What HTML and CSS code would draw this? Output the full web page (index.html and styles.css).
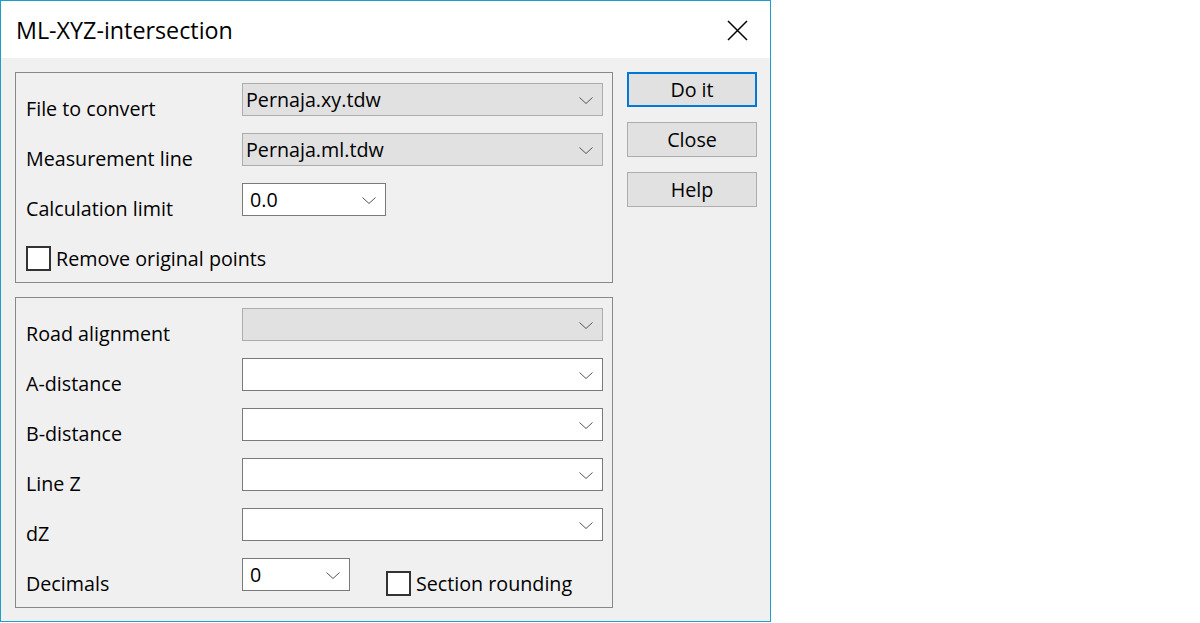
FILE: index.html
```html
<!DOCTYPE html>
<html>
<head>
<meta charset="utf-8">
<title>ML-XYZ-intersection</title>
<link rel="stylesheet" href="styles.css">
</head>
<body>
<div class="window">
  <div class="titlebar">
    <span class="title">ML-XYZ-intersection</span>
    <svg class="close" width="21" height="21" viewBox="0 0 21 21"><path d="M1 1L20 20M20 1L1 20" stroke="#000" stroke-width="1.5" fill="none"/></svg>
  </div>
  <div class="client">
    <div class="groups">
      <div class="group g1">
        <div class="row">
          <span class="label">File to convert</span>
          <div class="combo ro wide"><span class="val">Pernaja.xy.tdw</span><svg class="chev" width="14" height="7" viewBox="0 0 14 7"><polyline points="0.5,0.5 7,6.5 13.5,0.5" fill="none" stroke="#555" stroke-width="1"/></svg></div>
        </div>
        <div class="row">
          <span class="label">Measurement line</span>
          <div class="combo ro wide"><span class="val">Pernaja.ml.tdw</span><svg class="chev" width="14" height="7" viewBox="0 0 14 7"><polyline points="0.5,0.5 7,6.5 13.5,0.5" fill="none" stroke="#555" stroke-width="1"/></svg></div>
        </div>
        <div class="row">
          <span class="label">Calculation limit</span>
          <div class="combo ed limit"><span class="val">0.0</span><svg class="chev" width="14" height="7" viewBox="0 0 14 7"><polyline points="0.5,0.5 7,6.5 13.5,0.5" fill="none" stroke="#555" stroke-width="1"/></svg></div>
        </div>
        <div class="check first">
          <span class="box"></span><span class="ctext">Remove original points</span>
        </div>
      </div>
      <div class="group g2">
        <div class="row">
          <span class="label">Road alignment</span>
          <div class="combo ro wide"><span class="val"></span><svg class="chev" width="14" height="7" viewBox="0 0 14 7"><polyline points="0.5,0.5 7,6.5 13.5,0.5" fill="none" stroke="#555" stroke-width="1"/></svg></div>
        </div>
        <div class="row">
          <span class="label">A-distance</span>
          <div class="combo ed wide"><span class="val"></span><svg class="chev" width="14" height="7" viewBox="0 0 14 7"><polyline points="0.5,0.5 7,6.5 13.5,0.5" fill="none" stroke="#555" stroke-width="1"/></svg></div>
        </div>
        <div class="row">
          <span class="label">B-distance</span>
          <div class="combo ed wide"><span class="val"></span><svg class="chev" width="14" height="7" viewBox="0 0 14 7"><polyline points="0.5,0.5 7,6.5 13.5,0.5" fill="none" stroke="#555" stroke-width="1"/></svg></div>
        </div>
        <div class="row">
          <span class="label">Line Z</span>
          <div class="combo ed wide"><span class="val"></span><svg class="chev" width="14" height="7" viewBox="0 0 14 7"><polyline points="0.5,0.5 7,6.5 13.5,0.5" fill="none" stroke="#555" stroke-width="1"/></svg></div>
        </div>
        <div class="row">
          <span class="label">dZ</span>
          <div class="combo ed wide"><span class="val"></span><svg class="chev" width="14" height="7" viewBox="0 0 14 7"><polyline points="0.5,0.5 7,6.5 13.5,0.5" fill="none" stroke="#555" stroke-width="1"/></svg></div>
        </div>
        <div class="row">
          <span class="label">Decimals</span>
          <div class="combo ed dec"><span class="val">0</span><svg class="chev" width="14" height="7" viewBox="0 0 14 7"><polyline points="0.5,0.5 7,6.5 13.5,0.5" fill="none" stroke="#555" stroke-width="1"/></svg></div>
          <div class="check inrow">
            <span class="box"></span><span class="ctext">Section rounding</span>
          </div>
        </div>
      </div>
    </div>
    <div class="buttons">
      <div class="btn default">Do it</div>
      <div class="btn">Close</div>
      <div class="btn">Help</div>
    </div>
  </div>
</div>
</body>
</html>
```

FILE: styles.css
```css
* { box-sizing: border-box; }
html, body { margin: 0; padding: 0; background: #ffffff; }
body {
  font-family: "Open Sans", "Noto Sans", sans-serif;
  font-size: 19.7px;
  color: #000;
}
.window {
  width: 771px;
  height: 622px;
  border: 1px solid #1ba1c5;
  display: flex;
  flex-direction: column;
}
.titlebar {
  height: 57px;
  background: #ffffff;
  display: flex;
  align-items: center;
  justify-content: space-between;
  padding: 0 22px 0 15px;
}
.title {
  font-size: 23.3px;
  line-height: 30px;
}
.close { display: block; margin-top: 1px; }
.client {
  flex: 1;
  background: #f0f0f0;
  display: flex;
  padding: 14px 0 0 14px;
}
.groups { width: 598px; }
.group {
  border: 1px solid #888888;
  padding: 10px 9px 0 0;
}
.g1 { height: 211px; margin-bottom: 14px; }
.g2 { height: 311px; }
.row {
  display: flex;
  height: 33px;
  margin-bottom: 17px;
  align-items: flex-start;
}
.label {
  width: 226px;
  flex: none;
  padding-left: 10px;
  padding-top: 9px;
  line-height: 33px;
  white-space: nowrap;
}
.combo {
  height: 33px;
  border: 1px solid #adadad;
  display: flex;
  align-items: center;
  justify-content: space-between;
  padding: 0 9px 0 3px;
  flex: none;
}
.combo .val { line-height: 31px; white-space: nowrap; }
.ro { background: #e1e1e1; border-color: #adadad; }
.ed { background: #ffffff; border-color: #7a7a7a; padding-left: 7px; }
.wide { width: 361px; }
.limit { width: 144px; }
.dec { width: 108px; }
.chev { display: block; margin-top: 2px; flex: none; }
.check {
  display: flex;
  align-items: center;
  height: 25px;
}
.check.first { margin-top: 30px; margin-left: 10px; }
.check.inrow { margin-left: 36px; margin-top: 13px; }
.box {
  width: 25px;
  height: 25px;
  border: 2px solid #333333;
  background: #ffffff;
  flex: none;
}
.ctext {
  margin-left: 5px;
  line-height: 25px;
  white-space: nowrap;
}
.buttons {
  width: 130px;
  margin-left: 14px;
}
.btn {
  height: 35px;
  background: #e1e1e1;
  border: 1px solid #adadad;
  text-align: center;
  line-height: 33px;
  margin-bottom: 15px;
}
.btn.default {
  border: 2px solid #0078d7;
  line-height: 31px;
}
```
